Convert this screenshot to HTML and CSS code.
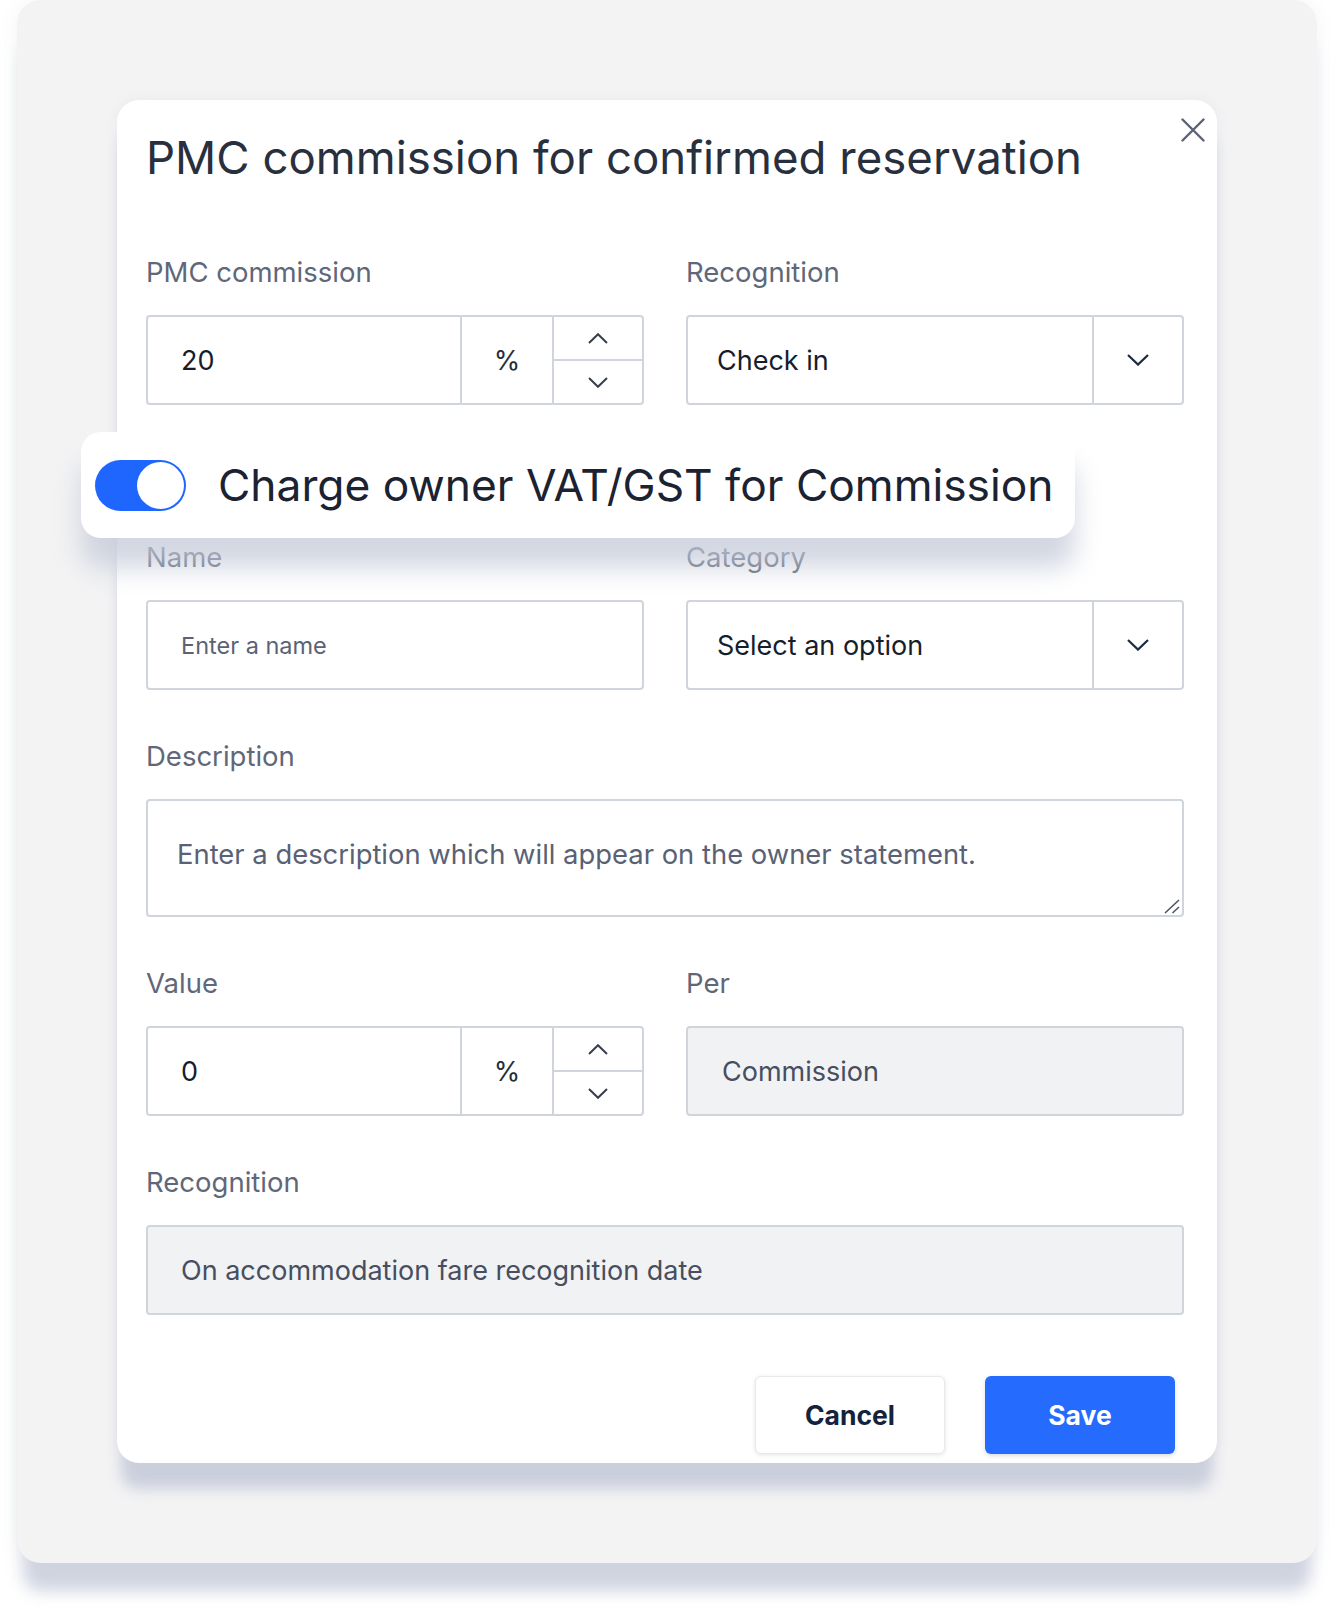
FILE: index.html
```html
<!DOCTYPE html>
<html lang="en">
<head>
<meta charset="utf-8">
<title>PMC commission for confirmed reservation</title>
<link rel="stylesheet" href="styles.css">
</head>
<body>
<div class="frame">
  <div class="modal">
    <button class="close" aria-label="Close">
      <svg width="24" height="24" viewBox="0 0 24 24"><path d="M1.5 1.5 L22.5 22.5 M22.5 1.5 L1.5 22.5" stroke="#5b6275" stroke-width="2.4" fill="none" stroke-linecap="round"/></svg>
    </button>
    <h1 class="title">PMC commission for confirmed reservation</h1>

    <div class="form">
      <div class="row row-first">
        <div class="field">
          <span class="field-label">PMC commission</span>
          <div class="control">
            <div class="num-value">20</div>
            <div class="unit">%</div>
            <div class="stepper">
              <div class="step"><svg width="20" height="11" viewBox="0 0 20 11"><path d="M1 10 L10 1.2 L19 10" stroke="#363d4b" stroke-width="2" fill="none"/></svg></div>
              <div class="step step-down"><svg width="20" height="11" viewBox="0 0 20 11"><path d="M1 1 L10 9.8 L19 1" stroke="#363d4b" stroke-width="2" fill="none"/></svg></div>
            </div>
          </div>
        </div>
        <div class="field">
          <span class="field-label">Recognition</span>
          <div class="control">
            <div class="select-value">Check in</div>
            <div class="caret"><svg width="22" height="12" viewBox="0 0 22 12"><path d="M1 1 L11 10.6 L21 1" stroke="#1c2a44" stroke-width="2.2" fill="none"/></svg></div>
          </div>
        </div>
      </div>

      <div class="callout">
        <div class="switch"><span class="knob"></span></div>
        <span class="callout-text">Charge owner VAT/GST for Commission</span>
      </div>

      <div class="row row-after-callout">
        <div class="field">
          <span class="field-label">Name</span>
          <input class="control text-input" type="text" placeholder="Enter a name">
        </div>
        <div class="field">
          <span class="field-label">Category</span>
          <div class="control">
            <div class="select-value">Select an option</div>
            <div class="caret"><svg width="22" height="12" viewBox="0 0 22 12"><path d="M1 1 L11 10.6 L21 1" stroke="#1c2a44" stroke-width="2.2" fill="none"/></svg></div>
          </div>
        </div>
      </div>

      <div class="row row-single">
        <div class="field">
          <span class="field-label">Description</span>
          <div class="textarea-wrap">
            <textarea class="textarea" placeholder="Enter a description which will appear on the owner statement."></textarea>
            <svg class="grip" width="16" height="15" viewBox="0 0 16 15"><path d="M1 14 L15 1 M8.5 14 L15 8" stroke="#4f5563" stroke-width="1.6" fill="none"/></svg>
          </div>
        </div>
      </div>

      <div class="row">
        <div class="field">
          <span class="field-label">Value</span>
          <div class="control">
            <div class="num-value">0</div>
            <div class="unit">%</div>
            <div class="stepper">
              <div class="step"><svg width="20" height="11" viewBox="0 0 20 11"><path d="M1 10 L10 1.2 L19 10" stroke="#363d4b" stroke-width="2" fill="none"/></svg></div>
              <div class="step step-down"><svg width="20" height="11" viewBox="0 0 20 11"><path d="M1 1 L10 9.8 L19 1" stroke="#363d4b" stroke-width="2" fill="none"/></svg></div>
            </div>
          </div>
        </div>
        <div class="field">
          <span class="field-label">Per</span>
          <div class="control disabled">
            <div class="disabled-value">Commission</div>
          </div>
        </div>
      </div>

      <div class="row row-single">
        <div class="field">
          <span class="field-label">Recognition</span>
          <div class="control disabled">
            <div class="disabled-value wide">On accommodation fare recognition date</div>
          </div>
        </div>
      </div>

      <div class="actions">
        <button class="btn btn-cancel">Cancel</button>
        <button class="btn btn-save">Save</button>
      </div>
    </div>
  </div>
</div>
</body>
</html>
```

FILE: styles.css
```css
* { box-sizing: border-box; }

html, body {
  margin: 0;
  padding: 0;
  background: #ffffff;
  font-family: Inter, "Noto Sans", "Liberation Sans", sans-serif;
}

body {
  height: 1623px;
}

.frame {
  margin-left: 17px;
  width: 1300px;
  height: 1563px;
  padding: 100px 0 0 100px;
  background: #f3f3f4;
  border-radius: 24px;
  box-shadow: 0 34px 16px -6px rgba(196, 201, 216, 0.8), 0 0 18px rgba(180, 186, 200, 0.16);
}

.modal {
  position: relative;
  width: 1100px;
  height: 1363px;
  padding: 30px 33px 8px 29px;
  background: #ffffff;
  border-radius: 22px;
  box-shadow: 0 30px 14px -4px rgba(196, 201, 216, 0.85), 0 0 14px rgba(180, 186, 200, 0.14);
}

.close {
  position: absolute;
  top: 18px;
  right: 12px;
  width: 24px;
  height: 24px;
  padding: 0;
  border: 0;
  background: none;
  display: flex;
}

.title {
  margin: 0;
  font-size: 45.6px;
  line-height: 56px;
  font-weight: 400;
  color: #28303e;
}

.form {
  display: flex;
  flex-direction: column;
  margin-top: 70px;
}

.row {
  display: grid;
  grid-template-columns: 498px 498px;
  column-gap: 42px;
  margin-top: 50px;
}

.row-first { margin-top: 0; }
.row-after-callout { margin-top: 3px; }
.row-single { grid-template-columns: 1038px; }

.field {
  display: flex;
  flex-direction: column;
}

.field-label {
  display: block;
  font-size: 27.5px;
  line-height: 32px;
  color: #606779;
  margin-bottom: 27px;
}

.control {
  height: 90px;
  border: 2px solid #d0d4db;
  border-radius: 4px;
  background: #ffffff;
  display: flex;
  align-items: stretch;
  font-size: 27px;
  color: #161d2c;
}

.num-value {
  flex: 1;
  display: flex;
  align-items: center;
  padding-left: 33px;
}

.unit {
  width: 92px;
  border-left: 2px solid #d0d4db;
  display: flex;
  align-items: center;
  justify-content: center;
  color: #262d3b;
}

.stepper {
  width: 90px;
  border-left: 2px solid #d0d4db;
  display: flex;
  flex-direction: column;
}

.step {
  flex: 1;
  display: flex;
  align-items: center;
  justify-content: center;
}

.step-down { border-top: 2px solid #d0d4db; }

.select-value {
  flex: 1;
  display: flex;
  align-items: center;
  padding-left: 29px;
}

.caret {
  width: 90px;
  border-left: 2px solid #d0d4db;
  display: flex;
  align-items: center;
  justify-content: center;
}

.text-input {
  width: 100%;
  padding: 0 0 0 33px;
  font-family: inherit;
  font-size: 23.5px;
  color: #161d2c;
  outline: none;
}

.text-input::placeholder { color: #5b6274; opacity: 1; }

.textarea-wrap {
  position: relative;
}

.textarea {
  display: block;
  width: 100%;
  height: 118px;
  padding: 37px 30px 0 29px;
  border: 2px solid #d0d4db;
  border-radius: 4px;
  font-family: inherit;
  font-size: 27.4px;
  line-height: 32px;
  color: #161d2c;
  background: #ffffff;
  outline: none;
  resize: none;
}

.textarea::placeholder { color: #596175; opacity: 1; }

.grip {
  position: absolute;
  right: 4px;
  bottom: 3px;
}

.disabled {
  background: #f1f2f4;
}

.disabled-value {
  flex: 1;
  display: flex;
  align-items: center;
  padding-left: 34px;
  color: #474e5f;
}

.disabled-value.wide { padding-left: 33px; }

.callout {
  position: relative;
  z-index: 1;
  display: flex;
  align-items: center;
  gap: 32px;
  width: 994px;
  height: 106px;
  margin: 27px 0 0 -65px;
  padding-left: 14px;
  background: #ffffff;
  border-radius: 20px;
  box-shadow: 0 30px 26px rgba(196, 201, 216, 0.75);
}

.switch {
  width: 91px;
  height: 51px;
  padding: 2px;
  border-radius: 26px;
  background: #1f66ff;
  display: flex;
  justify-content: flex-end;
  flex-shrink: 0;
}

.knob {
  width: 47px;
  height: 47px;
  border-radius: 50%;
  background: #ffffff;
}

.callout-text {
  font-size: 44.3px;
  line-height: 56px;
  color: #1b2232;
  white-space: nowrap;
}

.actions {
  display: flex;
  justify-content: flex-end;
  gap: 40px;
  margin-top: 61px;
  padding-right: 9px;
}

.btn {
  width: 190px;
  height: 78px;
  border-radius: 6px;
  font-family: inherit;
  font-size: 26.5px;
  font-weight: 700;
  display: flex;
  align-items: center;
  justify-content: center;
}

.btn-cancel {
  background: #ffffff;
  color: #13233d;
  border: 1px solid #e7e9ed;
  box-shadow: 0 1px 4px rgba(20, 30, 60, 0.12);
}

.btn-save {
  background: #246bfe;
  color: #ffffff;
  border: 0;
  box-shadow: 0 2px 4px rgba(20, 30, 60, 0.15);
}
```
